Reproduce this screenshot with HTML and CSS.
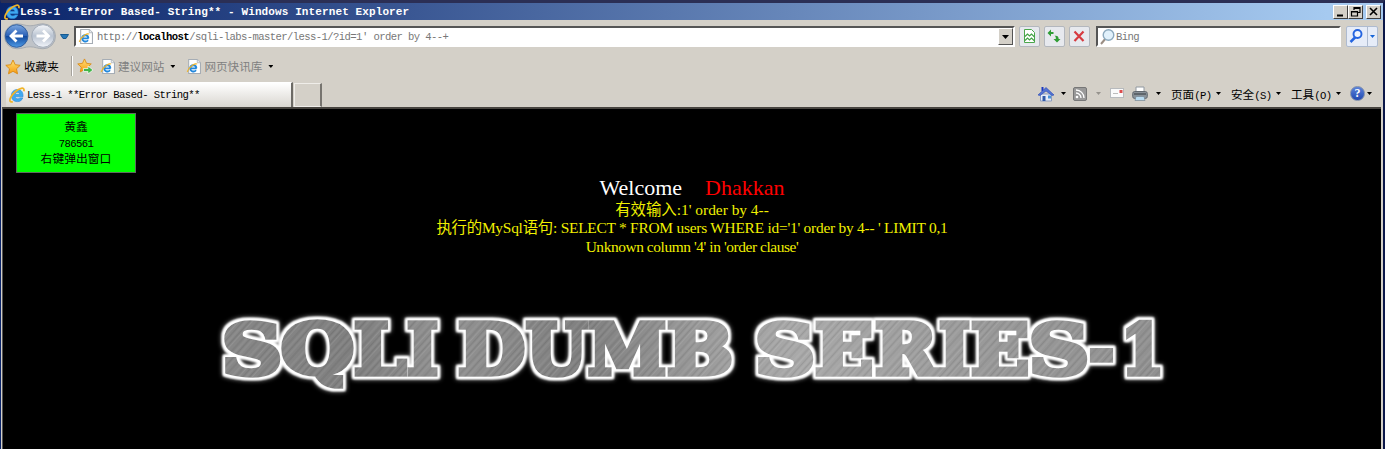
FILE: index.html
```
<!DOCTYPE html>
<html lang="zh-CN">
<head>
<meta charset="utf-8">
<title>Less-1 **Error Based- String**</title>
<link rel="stylesheet" href="styles.css">
</head>
<body>
<svg class="defs" width="0" height="0" aria-hidden="true">
  <defs>
    <linearGradient id="gBlue" x1="0" y1="0" x2="0" y2="1"><stop offset="0" stop-color="#7ea8e0"/><stop offset=".48" stop-color="#2b62b8"/><stop offset=".52" stop-color="#124a9f"/><stop offset="1" stop-color="#4f9be6"/></linearGradient>
    <linearGradient id="gGrey" x1="0" y1="0" x2="0" y2="1"><stop offset="0" stop-color="#f5f7fa"/><stop offset=".5" stop-color="#b9c3d1"/><stop offset="1" stop-color="#f2f5fa"/></linearGradient>
    <linearGradient id="gStar" x1="0" y1="0" x2="0" y2="1"><stop offset="0" stop-color="#ffe27a"/><stop offset="1" stop-color="#f79a10"/></linearGradient>
    <symbol id="e" viewBox="0 0 16 16">
      <path d="M14 9.800H6.200c.2 1.400 1.200 2 2.500 2 1 0 1.700-.3 2.200-.9h2.900c-.8 2.200-2.700 3.700-5.300 3.700-3.700 0-6.100-2.400-6.100-6.100 0-3.500 2.400-6 6.100-6 3.800 0 5.900 2.700 5.500 7.300zM6.200 7.200h4.500c-.2-1.200-1-1.800-2.200-1.800s-2 .6-2.300 1.800z" fill="#3fa9f0" stroke="#2a86d8" stroke-width=".6"/>
      <path d="M14.800 4.200C15.500 2 14.400.9 12.300 1.300 8.500 2.100 3.500 6.600 1.600 10.600.2 13.600.9 15.600 3.800 14.600" fill="none" stroke="#f0b428" stroke-width="1.700"/>
    </symbol>
    <symbol id="page" viewBox="0 0 14 14">
      <path d="M2.500.5h8l3 3v10h-11z" fill="#fff" stroke="#a6adb5"/><path d="M10.500.5v3h3" fill="#e8ebee" stroke="#a6adb5" stroke-width=".7"/>
      <path d="M10 8.800H4.200M9.400 10.500c-2 2.200-5.600 1-5.400-2C4.200 5 9.500 4.800 9.700 8.600" fill="none" stroke="#2388dc" stroke-width="1.700"/><path d="M10.300 5C9.500 3.300 3 6.500 1.200 12" fill="none" stroke="#f0b428" stroke-width="1.100"/>
    </symbol>
    <symbol id="star" viewBox="0 0 16 16"><path d="M8 1l2.200 4.700 5 .6-3.700 3.500 1 5L8 12.300 3.500 14.800l1-5L.8 6.300l5-.6z" fill="url(#gStar)" stroke="#d98a12" stroke-width=".9" stroke-linejoin="round"/></symbol>
    <pattern id="brushed" width="980" height="100" patternUnits="userSpaceOnUse">
      <rect width="980" height="100" fill="url(#shade)"/>
      <rect width="980" height="100" fill="url(#lines)"/>
    </pattern>
    <linearGradient id="shade" x1="0" y1="0" x2="1" y2="0"><stop offset="0" stop-color="#888"/><stop offset=".15" stop-color="#808080"/><stop offset=".24" stop-color="#929292"/><stop offset=".38" stop-color="#808080"/><stop offset=".53" stop-color="#a0a0a0"/><stop offset=".6" stop-color="#a9a9a9"/><stop offset=".8" stop-color="#999"/><stop offset="1" stop-color="#8f8f8f"/></linearGradient>
    <pattern id="lines" width="37" height="40" patternUnits="userSpaceOnUse" patternTransform="rotate(42)">
      <path d="M1 0v40M5.500 0v40M13 0v40M18 0v40M27 0v40M32.500 0v40" stroke="#fff" stroke-opacity=".12" stroke-width=".8"/><path d="M3.500 0v40M10 0v40M15.500 0v40M22 0v40M30 0v40M35.500 0v40" stroke="#000" stroke-opacity=".09" stroke-width="1.200"/>
    </pattern>
    <filter id="glow" filterUnits="userSpaceOnUse" x="0" y="0" width="980" height="95">
      <feMorphology in="SourceAlpha" operator="dilate" radius="2" result="d"/>
      <feGaussianBlur in="d" stdDeviation="1.100" result="edge"/>
      <feGaussianBlur in="d" stdDeviation="2.500" result="soft"/>
      <feFlood flood-color="#fff"/><feComposite in2="edge" operator="in" result="w"/>
      <feFlood flood-color="#eee"/><feComposite in2="soft" operator="in" result="h"/>
      <feMerge><feMergeNode in="h"/><feMergeNode in="w"/><feMergeNode in="w"/><feMergeNode in="SourceGraphic"/></feMerge>
    </filter>
  </defs>
</svg>
<div class="window">
  <header class="titlebar">
    <svg class="ico16" width="16" height="16"><use href="#e"/></svg>
    <span class="title">Less-1 **Error Based- String** - Windows Internet Explorer</span>
    <div class="controls">
      <span class="wbtn"><svg width="13" height="12"><path d="M3 9.500h6" stroke="#000" stroke-width="2"/></svg></span>
      <span class="wbtn"><svg width="13" height="12"><path d="M5 4V1.500h6v5H9M5 2.500h6M2.500 5.500h6v4.500h-6zM2.500 6h6" fill="none" stroke="#000" stroke-width="1.200"/></svg></span>
      <span class="wbtn close"><svg width="13" height="12"><path d="M3 2l7 7M10 2L3 9" stroke="#000" stroke-width="1.600"/></svg></span>
    </div>
  </header>
  <div class="nav">
    <svg class="arrows" width="52" height="27" viewBox="0 0 52 27">
      <path d="M13 .8c5 0 8 2 13 2s8-2 13-2a12.500 12.500 0 010 25c-5 0-8-2-13-2s-8 2-13 2a12.500 12.500 0 010-25z" fill="#bfc3c8" stroke="#9da3ab" stroke-width=".8"/>
      <circle cx="12.600" cy="13" r="11.300" fill="url(#gBlue)" stroke="#315f9f"/><path d="M19 13H7.500M12.500 7.500L7 13l5.500 5.500" fill="none" stroke="#fff" stroke-width="2.800"/>
      <circle cx="39" cy="13" r="11.300" fill="url(#gGrey)" stroke="#a2abb8"/><path d="M32.500 13H44M39 7.500l5.500 5.500-5.500 5.500" fill="none" stroke="#fff" stroke-width="2.800"/>
    </svg>
    <svg class="recent" width="9" height="6"><path d="M.5.5h8L6 4.500H3z" fill="#2778b8" stroke="#175a91"/></svg>
    <div class="address">
      <svg width="15" height="15"><use href="#page"/></svg>
      <span class="url">http://<b>localhost</b>/sqli-labs-master/less-1/?id=1<i class="quote">′</i> order by 4--+</span>
      <span class="drop"><svg width="7" height="4"><path d="M0 0h7L3.500 4z"/></svg></span>
    </div>
    <span class="tool"><svg width="20" height="20"><path d="M5.500 3.500h7l3 3v10h-10z" fill="#fff" stroke="#4ba64d"/><path d="M6 10.500l2.500-2.500 2 2 2-2 3 3M6 14.500l2.500-2.500 2 2 2-2 3 3" fill="none" stroke="#41a244" stroke-width="1.200"/></svg></span>
    <span class="tool"><svg width="20" height="20"><path d="M7 3.500L3.500 7 7 10.500V8h2.500V6H7z" fill="#2f9d35"/><path d="M13 16.500L9.500 13h2.300c.2-2-.3-2.700-1.300-3.200 2.500-.6 4.200.4 4.200 3.200H16.500z" fill="#2f9d35"/></svg></span>
    <span class="tool"><svg width="20" height="20"><path d="M5.500 5.500l9 9.500M14.500 5.500l-9 9.500" stroke="#d63a40" stroke-width="2.200"/></svg></span>
    <div class="search">
      <svg width="16" height="18"><path d="M7 10L2 16" stroke="#9a8d83" stroke-width="2"/><circle cx="9.500" cy="7" r="5.300" fill="#e1f1fb" stroke="#8ca9bd" stroke-width="1.400"/></svg>
      <span>Bing</span>
    </div>
    <div class="go">
      <svg width="20" height="20"><path d="M8.500 11l-5 5" stroke="#2464e0" stroke-width="2.500"/><circle cx="10.500" cy="8" r="4" fill="#eef4ff" stroke="#2464e0" stroke-width="1.900"/></svg>
      <span class="godrop"><svg width="5" height="3"><path d="M0 0h5L2.500 3z" fill="#1464d8"/></svg></span>
    </div>
  </div>
  <div class="favorites">
    <svg width="16" height="16"><use href="#star"/></svg>
    <span class="fav">收藏夹</span>
    <span class="sep"></span>
    <svg width="17" height="17"><use href="#star" width="15" height="15"/><path d="M6.500 10.500H11V8l5 4-5 4v-2.500H6.500z" fill="#42b649" stroke="#fff" stroke-width=".7"/></svg>
    <svg class="pg" width="15" height="15"><use href="#page"/></svg>
    <span class="link">建议网站</span><i class="tri"></i>
    <svg class="pg2" width="15" height="15"><use href="#page"/></svg>
    <span class="link">网页快讯库</span><i class="tri"></i>
  </div>
  <div class="tabs">
    <div class="tab"><svg width="16" height="16"><use href="#e"/></svg><span>Less-1 **Error Based- String**</span></div>
    <div class="newtab"></div>
    <div class="commands">
      <svg width="16" height="16"><path d="M2.500 8h11v7h-11z" fill="#e7edf8" stroke="#8d9dbf"/><path d="M3.500 1h2v4h-2z" fill="#1c39c0"/><path d="M0 9L8 1.500 16 9l-2 .5-6-4.500-6 4.500z" fill="#5475d4" stroke="#2745b4" stroke-width=".6"/><path d="M4.500 10h3v5h-3z" fill="#315aa8"/><path d="M10 9.500h3v3h-3z" fill="#4a93d8"/></svg>
      <i class="tri c1"></i>
      <svg class="c2" width="14" height="14"><rect x=".5" y=".5" width="13" height="13" rx="1.500" fill="#999" stroke="#777"/><circle cx="4" cy="10" r="1.300" fill="#fff"/><path d="M3 6a5 5 0 015 5M3 3a8 8 0 018 8" fill="none" stroke="#fff" stroke-width="1.300"/></svg>
      <i class="tri faded c3"></i>
      <svg class="c4" width="15" height="11"><rect x=".5" y=".5" width="13" height="9" fill="#fafafa" stroke="#b7babd"/><path d="M3 5.500h5" stroke="#bbb"/><path d="M9.500 2h3v3h-3z" fill="#dc4d4d"/></svg>
      <svg class="c5" width="16" height="16"><path d="M4 1h8v5H4z" fill="#fff" stroke="#9098a0"/><rect x=".7" y="5.500" width="14.600" height="7" rx="2" fill="#8a9299" stroke="#626970"/><path d="M2 8h12" stroke="#4f565c" stroke-width="1.500"/><path d="M4 10.500h8l1 4H3z" fill="#b9dcf2" stroke="#798791" stroke-width=".7"/></svg>
      <i class="tri c6"></i>
      <span class="cmd c7">页面<small>(P)</small></span><i class="tri c8"></i>
      <span class="cmd c9">安全<small>(S)</small></span><i class="tri c8"></i>
      <span class="cmd c9">工具<small>(O)</small></span><i class="tri c8"></i>
      <span class="help">?</span><i class="tri c10"></i>
    </div>
  </div>
  <main class="page">
    <div class="badge"><div>黄鑫</div><div class="num">786561</div><div>右键弹出窗口</div></div>
    <div class="message">
      <p class="welcome"><span>Welcome</span><span class="name">Dhakkan</span></p>
      <p class="l1">有效输入:1' order by 4--</p>
      <p class="l2">执行的MySql语句: SELECT * FROM users WHERE id='1' order by 4-- ' LIMIT 0,1</p>
      <p class="l3">Unknown column '4' in 'order clause'</p>
    </div>
    <svg class="banner" width="980" height="95" viewBox="0 0 980 95">
      <text class="metal" y="68" filter="url(#glow)"><tspan x="13" textLength="60" lengthAdjust="spacingAndGlyphs">S</tspan><tspan x="72" textLength="73" lengthAdjust="spacingAndGlyphs">Q</tspan><tspan x="145" textLength="52" lengthAdjust="spacingAndGlyphs">L</tspan><tspan x="198" textLength="31" lengthAdjust="spacingAndGlyphs">I</tspan> <tspan x="249" textLength="67" lengthAdjust="spacingAndGlyphs">D</tspan><tspan x="317" textLength="61" lengthAdjust="spacingAndGlyphs">U</tspan><tspan x="379" textLength="78" lengthAdjust="spacingAndGlyphs">M</tspan><tspan x="458" textLength="66" lengthAdjust="spacingAndGlyphs">B</tspan> <tspan x="546" textLength="60" lengthAdjust="spacingAndGlyphs">S</tspan><tspan x="606" textLength="58" lengthAdjust="spacingAndGlyphs">E</tspan><tspan x="666" textLength="62" lengthAdjust="spacingAndGlyphs">R</tspan><tspan x="730" textLength="31" lengthAdjust="spacingAndGlyphs">I</tspan><tspan x="762" textLength="58" lengthAdjust="spacingAndGlyphs">E</tspan><tspan x="820" textLength="60" lengthAdjust="spacingAndGlyphs">S</tspan><tspan x="880" textLength="25" lengthAdjust="spacingAndGlyphs">-</tspan><tspan x="912" textLength="43" lengthAdjust="spacingAndGlyphs">1</tspan></text>
    </svg>
  </main>
</div>
</body>
</html>
```
FILE: styles.css
```
* { box-sizing: border-box; }
body { margin: 0; background: #2b2f55; overflow: hidden; font-family: "Liberation Mono", "Noto Sans CJK SC", monospace; }
.defs { position: absolute; }
svg { display: block; flex: none; }
p { margin: 0; }
i { font-style: normal; }
.window { width: 1385px; height: 449px; border-top: 3px solid #2b2f55; border-right: 2px solid #0b1749; border-left: 1px solid #0a246a; background: #d4d0c8; display: flex; flex-direction: column; }
.titlebar { height: 17px; display: flex; align-items: center; padding-left: 3px; background: linear-gradient(90deg, #0a246a, #a6caf0 96%); color: #fff; }
.title { font: bold 11px/16px "Liberation Mono", monospace; letter-spacing: .11px; white-space: pre; }
.controls { margin-left: auto; display: flex; padding-right: 2px; }
.wbtn { width: 15px; height: 14px; background: #d4d0c8; border: 1px solid #fff; border-right-color: #404040; border-bottom-color: #404040; }
.close { margin-left: 3px; }
.nav { height: 33px; display: flex; align-items: center; padding-left: 3px; }
.recent { margin-left: 4px; }
.address { margin-left: 5px; width: 941px; height: 21px; display: flex; align-items: center; background: #fff; border: 2px solid #fff; border-top-color: #555; border-left-color: #555; padding-left: 2px; }
.url, .search, .tab, .badge .num { font-size: 10.600px; letter-spacing: -.6px; }
.url { margin-left: 4px; color: #777; white-space: pre; }
.url b { color: #000; }
.quote { display: inline-block; width: 5.760px; }
.drop { margin-left: auto; width: 15px; height: 17px; background: #d4d0c8; border: 1px solid #fff; border-right-color: #555; border-bottom-color: #555; display: flex; align-items: center; justify-content: center; }
.tool { width: 21px; height: 21px; border: 1px solid #b3b7bd; border-radius: 2px; background: #e7e9ee; margin-left: 4px; }
.tool svg { margin: -1px; }
.search { margin-left: 6px; width: 245px; height: 21px; background: #fff; border: 2px solid #fff; border-top-color: #555; border-left-color: #555; display: flex; align-items: center; padding-left: 1px; color: #777; }
.search span { margin-left: 1px; }
.go { margin-left: 5px; width: 32px; height: 21px; display: flex; border: 1px solid #aebbd0; border-radius: 2px; background: #e6ecf8; }
.go svg { margin-top: -1px; }
.godrop { flex: 1; border-left: 1px solid #aebbd0; display: flex; align-items: center; justify-content: center; }
.favorites { height: 27px; display: flex; align-items: center; padding-left: 4px; font-size: 11.600px; }
.favorites > span { position: relative; top: -1px; }
.fav { margin-left: 3px; width: 36px; color: #000; }
.sep { margin: 0 4px 0 12px; width: 1px; height: 20px; background: #fff; box-shadow: -1px 0 #a5a29c; }
.pg { margin-left: 6px; }
.pg2 { margin-left: 11px; }
.link { margin-left: 3px; color: #808080; white-space: nowrap; }
.tri { flex: none; width: 5px; height: 3px; margin-left: 6px; background: #000; clip-path: polygon(0 0, 100% 0, 50% 100%); }
.tabs { height: 27px; display: flex; align-items: flex-end; padding-left: 5px; }
.tab { width: 287px; height: 25px; display: flex; align-items: center; padding-left: 3px; border-right: 2px solid #6c6a65; border-top: 1px solid #fff; background: linear-gradient(#fff, #d9d6d0); white-space: pre; }
.tab span { margin-left: 2px; }
.newtab { margin-left: 1px; width: 28px; height: 24px; border: 1px solid #efede9; border-right: 2px solid #77746f; }
.commands { margin-left: auto; height: 27px; display: flex; align-items: center; padding-right: 11px; }
.c1 { margin-left: 7px; }
.c2 { margin-left: 7px; }
.c3 { margin-left: 9px; }
.c4 { margin-left: 9px; }
.c5 { margin-left: 7px; }
.c6 { margin-left: 8px; }
.c7 { margin-left: 10px; }
.c8 { margin-left: 3px; }
.c9 { margin-left: 10px; }
.c10 { margin-left: 2px; }
.faded { background: #96938d; }
.cmd { width: 42px; font-size: 11.600px; white-space: nowrap; }
.cmd small { font-size: 10.600px; letter-spacing: -.6px; }
.help { margin-left: 9px; width: 15px; height: 15px; border-radius: 50%; border: 1px solid #7f8eab; background: linear-gradient(#5c83da, #2149b0); color: #fff; font: bold 12px/13px "Liberation Serif", serif; text-align: center; }
.page { flex: 1; margin: 0 2px 0 1px; border-top: 2px solid #47443f; border-left: 1px solid #555; background: #000; display: flex; flex-direction: column; }
.badge { margin: 4px 0 0 13px; width: 120px; height: 60px; border: 1px solid #5f6b5f; background: #0f0; padding-top: 6px; text-align: center; font: 11.800px/16px "Liberation Mono", "Noto Sans CJK SC", monospace; color: #000; }
.message { margin-top: 3px; display: flex; flex-direction: column; align-items: center; font: 15.400px/18.400px "Liberation Serif", "Noto Sans CJK SC", serif; color: #f0f000; white-space: pre; }
.welcome { font-size: 22px; line-height: 24px; margin-bottom: 1px; color: #fff; }
.name { margin-left: 23px; color: #f00; }
.l1, .l2, .l3 { height: 18.400px; }
.l2 { letter-spacing: -.23px; }
.l3 { letter-spacing: -.42px; }
.banner { margin: 50px 0 0 206px; }
.metal { font: bold 70px "DejaVu Serif", serif; fill: url(#brushed); stroke: url(#brushed); stroke-width: 5.500px; stroke-linejoin: miter; }
```
